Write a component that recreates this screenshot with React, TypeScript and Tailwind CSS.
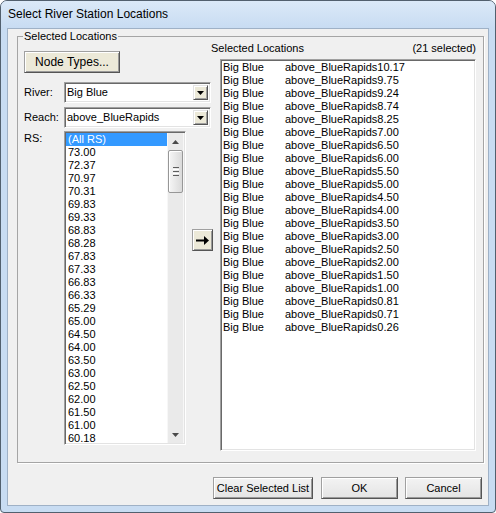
import type { ReactNode } from "react";

const rsItems = [
  "(All RS)",
  "73.00",
  "72.37",
  "70.97",
  "70.31",
  "69.83",
  "69.33",
  "68.83",
  "68.28",
  "67.83",
  "67.33",
  "66.83",
  "66.33",
  "65.29",
  "65.00",
  "64.50",
  "64.00",
  "63.50",
  "63.00",
  "62.50",
  "62.00",
  "61.50",
  "61.00",
  "60.18",
];

const selectedStations = [
  "10.17",
  "9.75",
  "9.24",
  "8.74",
  "8.25",
  "7.00",
  "6.50",
  "6.00",
  "5.50",
  "5.00",
  "4.50",
  "4.00",
  "3.50",
  "3.00",
  "2.50",
  "2.00",
  "1.50",
  "1.00",
  "0.81",
  "0.71",
  "0.26",
];

function RaisedButton({
  children,
  className,
  beige = false,
}: {
  children: ReactNode;
  className: string;
  beige?: boolean;
}) {
  return (
    <div
      className={`flex items-center justify-center whitespace-nowrap border border-t-[#a0a0a0] border-l-[#a0a0a0] border-r-[#555] border-b-[#555] shadow-[inset_1px_1px_0_#fff,inset_-1px_-1px_0_#9a9a9a] ${
        beige ? "bg-[#ece9d8]" : "bg-gradient-to-b from-[#f3f3f3] to-[#e4e4e4]"
      } ${className}`}
    >
      {children}
    </div>
  );
}

function Dropdown({ value }: { value: string }) {
  return (
    <div className="flex h-[21px] w-[147px] items-center border border-t-[#a0a0a0] border-l-[#a0a0a0] border-r-white border-b-white bg-white shadow-[inset_1px_1px_0_#696969,inset_-1px_-1px_0_#e3e3e3]">
      <span className="flex-1 pl-[2px]">{value}</span>
      <div className="mr-[2px] flex h-[15px] w-[15px] items-center justify-center border border-t-[#e3e3e3] border-l-[#e3e3e3] border-r-[#555] border-b-[#555] bg-[#ece9d8] shadow-[inset_1px_1px_0_#fff,inset_-1px_-1px_0_#a0a0a0]">
        <svg width="7" height="4" viewBox="0 0 7 4">
          <polygon points="0,0 7,0 3.5,4" fill="#000" />
        </svg>
      </div>
    </div>
  );
}

function ScrollBar() {
  return (
    <div className="flex w-[17px] flex-col border-x border-[#f7f7f7] bg-[#eaeaea]">
      <div className="flex h-[17px] items-center justify-center">
        <svg width="7" height="4" viewBox="0 0 7 4">
          <polygon points="3.5,0 7,4 0,4" fill="#4a4a4a" />
        </svg>
      </div>
      <div className="flex h-[43px] flex-col items-center justify-center gap-[1px] rounded-[2px] border border-[#979797] bg-gradient-to-r from-[#f6f6f6] to-[#dadada] shadow-[inset_1px_1px_0_#fff]">
        <div className="h-[1px] w-[6px] bg-[#5e5e5e]" />
        <div className="h-[1px] w-[6px] bg-[#fff]" />
        <div className="h-[1px] w-[6px] bg-[#5e5e5e]" />
        <div className="h-[1px] w-[6px] bg-[#fff]" />
        <div className="h-[1px] w-[6px] bg-[#5e5e5e]" />
      </div>
      <div className="flex-1" />
      <div className="flex h-[17px] items-center justify-center">
        <svg width="7" height="4" viewBox="0 0 7 4">
          <polygon points="0,0 7,0 3.5,4" fill="#4a4a4a" />
        </svg>
      </div>
    </div>
  );
}

export default function App() {
  return (
    <div className="h-[513px] w-[496px] overflow-hidden bg-white font-['Liberation_Sans',Arial,sans-serif] text-[11px] leading-[13px] text-black">
      <div className="flex h-full flex-col rounded-t-[7px] rounded-b-[4px] border border-[#52606e] bg-[#c8dcf2]">
        <div className="flex h-[27px] items-center rounded-t-[6px] bg-gradient-to-b from-[#dbe9f8] to-[#c8dcf2] pl-[7px] text-[12px]">
          Select River Station Locations
        </div>
        <div className="mx-[6px] mb-[6px] flex flex-1 flex-col border border-[#9fb1c6] bg-[#f0f0f0]">
          <fieldset className="mt-[1px] mr-[4px] ml-[9px] h-[433px] border border-[#a5a5a5] shadow-[1px_1px_0_#fff]">
            <legend className="ml-[5px] px-[1px] leading-[13px]">Selected Locations</legend>
            <div className="flex pl-[6px]">
              <div className="mt-[8px] flex w-[189px] flex-col">
                <RaisedButton beige className="h-[22px] w-[96px] text-[12px]">
                  Node Types...
                </RaisedButton>
                <div className="mt-[9px] flex items-center">
                  <span className="w-[40px]">River:</span>
                  <Dropdown value="Big Blue" />
                </div>
                <div className="mt-[4px] flex items-center">
                  <span className="w-[40px]">Reach:</span>
                  <Dropdown value="above_BlueRapids" />
                </div>
                <div className="mt-[3px] flex">
                  <span className="w-[40px] pt-[1px]">RS:</span>
                  <div className="flex h-[314px] w-[122px] overflow-hidden border border-t-[#a0a0a0] border-l-[#a0a0a0] border-r-white border-b-white bg-white shadow-[inset_1px_1px_0_#696969,inset_-1px_-1px_0_#e3e3e3]">
                    <div className="my-[1px] ml-[1px] flex w-[101px] flex-col overflow-hidden">
                      {rsItems.map((item, i) => (
                        <div
                          key={item}
                          className={`h-[13px] shrink-0 pl-[2px] ${
                            i === 0 ? "bg-[#3399ff] text-white" : ""
                          }`}
                        >
                          {item}
                        </div>
                      ))}
                    </div>
                    <div className="my-[1px] flex">
                      <ScrollBar />
                    </div>
                  </div>
                  <RaisedButton beige className="mt-[98px] ml-[6px] h-[22px] w-[21px]">
                    <svg width="13" height="9" viewBox="0 0 13 9">
                      <rect x="0" y="3.5" width="9" height="2" fill="#000" />
                      <polygon points="8,0 13,4.5 8,9" fill="#000" />
                    </svg>
                  </RaisedButton>
                </div>
              </div>
              <div className="-mt-[1px] flex w-[263px] flex-col">
                <div className="-ml-[2px] flex h-[13px] justify-between">
                  <span>Selected Locations</span>
                  <span>(21 selected)</span>
                </div>
                <div className="mt-[4px] ml-[7px] flex h-[392px] flex-col border border-t-[#a0a0a0] border-l-[#a0a0a0] border-r-white border-b-white bg-white py-[1px] pl-[2px] shadow-[inset_1px_1px_0_#696969,inset_-1px_-1px_0_#e3e3e3]">
                  {selectedStations.map((rs) => (
                    <div key={rs} className="flex h-[13px]">
                      <span className="w-[62px]">Big Blue</span>
                      <span>above_BlueRapids{rs}</span>
                    </div>
                  ))}
                </div>
              </div>
            </div>
          </fieldset>
          <div className="mt-[14px] flex justify-end pr-[6px]">
            <RaisedButton className="h-[22px] w-[100px]">Clear Selected List</RaisedButton>
            <RaisedButton className="ml-[8px] h-[22px] w-[77px]">OK</RaisedButton>
            <RaisedButton className="ml-[7px] h-[22px] w-[77px]">Cancel</RaisedButton>
          </div>
        </div>
      </div>
    </div>
  );
}
